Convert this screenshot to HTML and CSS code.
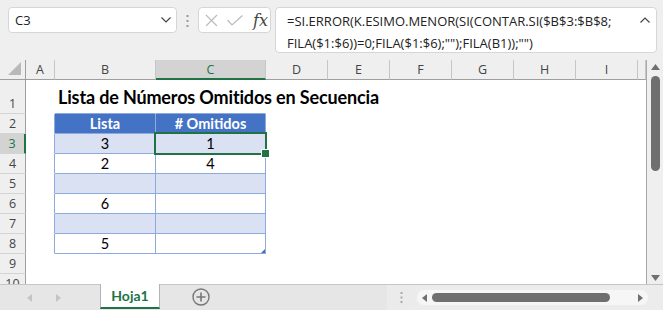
FILE: index.html
```html
<!DOCTYPE html>
<html lang="es">

<head>
    <meta charset="UTF-8">
    <title>Hoja1</title>
    <link rel="stylesheet" href="styles.css">
</head>

<body>
    <div class="toolbar">
        <div class="namebox">
            <span>C3</span>
            <svg width="10" height="6" viewBox="0 0 10 6"><polyline points="0.5,0.5 5,5 9.5,0.5" fill="none" stroke="#444" stroke-width="1.2"/></svg>
        </div>
        <svg class="grip" width="3" height="12" viewBox="0 0 3 12"><rect x="0.5" y="0" width="2" height="2" fill="#999"/><rect x="0.5" y="5" width="2" height="2" fill="#999"/><rect x="0.5" y="10" width="2" height="2" fill="#999"/></svg>
        <div class="fxbox">
            <svg width="13" height="13" viewBox="0 0 13 13"><path d="M1 1L12 12M12 1L1 12" stroke="#bbb" stroke-width="1.2"/></svg>
            <svg width="16" height="11" viewBox="0 0 16 11"><polyline points="0.5,5 5,10 15.5,0.5" fill="none" stroke="#bbb" stroke-width="1.2"/></svg>
            <span class="fx">fx</span>
        </div>
        <div class="formula">
            <p>=SI.ERROR(K.ESIMO.MENOR(SI(CONTAR.SI($B$3:$B$8;<br>FILA($1:$6))=0;FILA($1:$6);"");FILA(B1));"")</p>
            <svg width="10" height="6" viewBox="0 0 10 6"><polyline points="0.5,5.5 5,1 9.5,5.5" fill="none" stroke="#444" stroke-width="1.2"/></svg>
        </div>
    </div>

    <div class="main">
        <div class="sheet">
            <div class="ch corner"><svg width="13" height="13" viewBox="0 0 13 13"><polygon points="13,0 13,13 0,13" fill="#b9b9b9"/></svg></div>
            <div class="ch">A</div>
            <div class="ch">B</div>
            <div class="ch sel">C</div>
            <div class="ch">D</div>
            <div class="ch">E</div>
            <div class="ch">F</div>
            <div class="ch">G</div>
            <div class="ch">H</div>
            <div class="ch">I</div>
            <div class="ch"></div>

            <div class="rh">1</div>
            <div class="c"></div>
            <div class="c tt title">Lista de Números Omitidos en Secuencia</div>
            <div class="c tt"></div>
            <div class="c rest"></div>

            <div class="rh">2</div>
            <div class="c tl"></div>
            <div class="c td th">Lista</div>
            <div class="c td th"># Omitidos</div>
            <div class="c rest"></div>

            <div class="rh sel">3</div>
            <div class="c tl"></div>
            <div class="c td band">3</div>
            <div class="c td band cur">1</div>
            <div class="c rest"></div>

            <div class="rh">4</div>
            <div class="c tl"></div>
            <div class="c td">2</div>
            <div class="c td">4</div>
            <div class="c rest"></div>

            <div class="rh">5</div>
            <div class="c tl"></div>
            <div class="c td band"></div>
            <div class="c td band"></div>
            <div class="c rest"></div>

            <div class="rh">6</div>
            <div class="c tl"></div>
            <div class="c td">6</div>
            <div class="c td"></div>
            <div class="c rest"></div>

            <div class="rh">7</div>
            <div class="c tl"></div>
            <div class="c td band"></div>
            <div class="c td band"></div>
            <div class="c rest"></div>

            <div class="rh">8</div>
            <div class="c tl"></div>
            <div class="c td">5</div>
            <div class="c td last"></div>
            <div class="c rest"></div>

            <div class="rh">9</div>
            <div class="c"></div>
            <div class="c"></div>
            <div class="c"></div>
            <div class="c rest"></div>

            <div class="rh">10</div>
            <div class="c"></div>
            <div class="c"></div>
            <div class="c"></div>
            <div class="c rest"></div>
        </div>

        <div class="vscroll">
            <svg width="9" height="6" viewBox="0 0 9 6"><polygon points="4.5,0 9,6 0,6" fill="#6f6f6f"/></svg>
            <div class="vthumb"></div>
            <svg class="down" width="9" height="6" viewBox="0 0 9 6"><polygon points="0,0 9,0 4.5,6" fill="#6f6f6f"/></svg>
        </div>
    </div>

    <div class="tabbar">
        <div class="nav">
            <svg width="5" height="8" viewBox="0 0 5 8"><polygon points="5,0 5,8 0,4" fill="#c4c4c4"/></svg>
            <svg width="5" height="8" viewBox="0 0 5 8"><polygon points="0,0 5,4 0,8" fill="#c4c4c4"/></svg>
        </div>
        <div class="tab">Hoja1</div>
        <svg class="addsheet" width="18" height="18" viewBox="0 0 18 18"><circle cx="9" cy="9" r="8" fill="none" stroke="#777" stroke-width="1.4"/><path d="M9 4.5V13.5M4.5 9H13.5" stroke="#777" stroke-width="1.6"/></svg>
        <div class="filler"></div>
        <div class="hgrip">
            <svg width="3" height="11" viewBox="0 0 3 11"><rect x="0.5" y="0" width="2" height="2" fill="#aaa"/><rect x="0.5" y="4.5" width="2" height="2" fill="#aaa"/><rect x="0.5" y="9" width="2" height="2" fill="#aaa"/></svg>
        </div>
        <div class="hscroll">
            <div class="track">
                <svg width="5" height="8" viewBox="0 0 5 8"><polygon points="5,0 5,8 0,4" fill="#6f6f6f"/></svg>
                <div class="hthumb"></div>
                <svg width="5" height="8" viewBox="0 0 5 8"><polygon points="0,0 5,4 0,8" fill="#6f6f6f"/></svg>
            </div>
        </div>
    </div>
</body>

</html>
```

FILE: styles.css
```css
* {
    margin: 0;
    padding: 0;
    box-sizing: border-box;
}

body {
    width: 663px;
    height: 310px;
    overflow: hidden;
    background-color: #efefef;
    font-family: "Open Sans", "Noto Sans", sans-serif;
}

/* barra de formulas */
.toolbar {
    display: flex;
    align-items: flex-start;
    height: 60px;
    padding: 7px 0 0 8px;
}

.namebox {
    display: flex;
    align-items: center;
    justify-content: space-between;
    width: 169px;
    height: 26px;
    padding: 0 5px 0 6px;
    background-color: #fff;
    border: 1px solid #d6d6d6;
    border-radius: 4px;
    font-size: 13px;
    color: #1e1e1e;
}

.grip {
    margin: 8px 0 0 9px;
}

.fxbox {
    display: flex;
    align-items: center;
    width: 73px;
    height: 26px;
    margin-left: 9px;
    padding-left: 6px;
    gap: 9px;
    background-color: #fff;
    border: 1px solid #d6d6d6;
    border-radius: 4px;
}

.fx {
    margin-left: 1px;
    font-family: "DejaVu Serif", serif;
    font-style: italic;
    font-size: 16px;
    color: #444;
}

.formula {
    display: flex;
    justify-content: space-between;
    width: 382px;
    height: 46px;
    margin-left: 4px;
    padding: 2px 6px 0 11px;
    background-color: #fff;
    border: 1px solid #d6d6d6;
    border-radius: 4px;
    font-size: 13px;
    line-height: 22px;
    color: #222;
}

.formula svg {
    margin-top: 7px;
}

/* hoja */
.main {
    display: flex;
    height: 224px;
}

.sheet {
    display: grid;
    grid-template-columns: 26px 29px 101px 110px repeat(6, 62px) 8px;
    grid-template-rows: 20px 34px repeat(9, 20px);
    width: 647px;
    background-color: #fff;
    border-right: 1px solid #a8a8a8;
    overflow: hidden;
}

.ch {
    display: flex;
    align-items: center;
    justify-content: center;
    background-color: #efefef;
    border-right: 1px solid #c6c6c6;
    border-bottom: 1px solid #9e9e9e;
    font-size: 12.5px;
    color: #444;
}

.ch.corner {
    align-items: flex-end;
    justify-content: flex-end;
    padding: 0 4px 4px 0;
    border-right-color: #9e9e9e;
}

.ch.sel {
    background-color: #d3d3d3;
    border-bottom: 2px solid #217346;
    color: #217346;
}

.rh {
    display: flex;
    align-items: flex-end;
    justify-content: center;
    padding-bottom: 1px;
    background-color: #efefef;
    border-right: 1px solid #9e9e9e;
    border-bottom: 1px solid #d4d4d4;
    font-size: 12.5px;
    color: #444;
}

.rh.sel {
    background-color: #d3d3d3;
    border-right: 2px solid #217346;
    color: #217346;
}

.c {
    display: flex;
    align-items: flex-end;
    justify-content: center;
    padding-bottom: 1px;
    border-right: 1px solid transparent;
    border-bottom: 1px solid transparent;
    font-family: Lato, "Open Sans", sans-serif;
    font-size: 14.5px;
    color: #000;
}

.c.rest {
    grid-column: span 7;
}

.c.title {
    justify-content: flex-start;
    padding: 0 0 5px 3px;
    white-space: nowrap;
    font-size: 18px;
    letter-spacing: -0.15px;
    font-weight: bold;
}

.c.tt {
    border-bottom-color: #8ea9db;
}

.c.tl {
    border-right-color: #8ea9db;
}

.c.td {
    border-right-color: #8ea9db;
    border-bottom-color: #8ea9db;
}

.c.th {
    background-color: #4472c4;
    color: #fff;
    font-weight: bold;
}

.c.band {
    background-color: #d9e1f2;
}

.c.cur {
    position: relative;
}

.c.cur::after {
    content: "";
    position: absolute;
    left: -2px;
    top: -2px;
    right: -2px;
    bottom: -2px;
    border: 2px solid #217346;
}

.c.cur::before {
    content: "";
    position: absolute;
    right: -5px;
    bottom: -5px;
    width: 7px;
    height: 7px;
    background-color: #217346;
    border: 1px solid #fff;
    z-index: 1;
}

.c.last {
    position: relative;
}

.c.last::after {
    content: "";
    position: absolute;
    right: 0;
    bottom: 0;
    border-left: 4px solid transparent;
    border-bottom: 4px solid #4472c4;
}

.vscroll {
    display: flex;
    flex-direction: column;
    align-items: center;
    width: 16px;
    padding-top: 4px;
}

.vthumb {
    width: 9px;
    height: 95px;
    margin-top: 6px;
    background-color: #6f6f6f;
    border-radius: 5px;
}

.vscroll .down {
    margin-top: auto;
    margin-bottom: 3px;
}

/* pestañas */
.tabbar {
    display: flex;
    height: 26px;
    background-color: #e6e6e6;
    border-top: 1px solid #c6c6c6;
}

.nav {
    display: flex;
    align-items: center;
    gap: 24px;
    width: 100px;
    padding-left: 27px;
}

.tab {
    display: flex;
    align-items: center;
    justify-content: center;
    width: 60px;
    height: 25px;
    margin-top: -1px;
    background-color: #fff;
    border-left: 1px solid #b4b4b4;
    border-right: 1px solid #b4b4b4;
    border-bottom: 2px solid #217346;
    font-family: Lato, "Open Sans", sans-serif;
    font-size: 14px;
    font-weight: bold;
    color: #217346;
}

.addsheet {
    margin: 3px 0 0 32px;
}

.filler {
    flex: 1;
}

.hgrip {
    display: flex;
    align-items: center;
    width: 28px;
    padding-left: 13px;
    background-color: #ebebeb;
}

.hscroll {
    width: 248px;
    padding: 5px 15px 0 2px;
    background-color: #ececec;
}

.track {
    display: flex;
    align-items: center;
    height: 15px;
    padding: 0 5px;
    background-color: #f6f6f6;
    border-radius: 7px;
}

.hthumb {
    width: 178px;
    height: 9px;
    margin: 0 auto 0 5px;
    background-color: #6f6f6f;
    border-radius: 5px;
}
```
